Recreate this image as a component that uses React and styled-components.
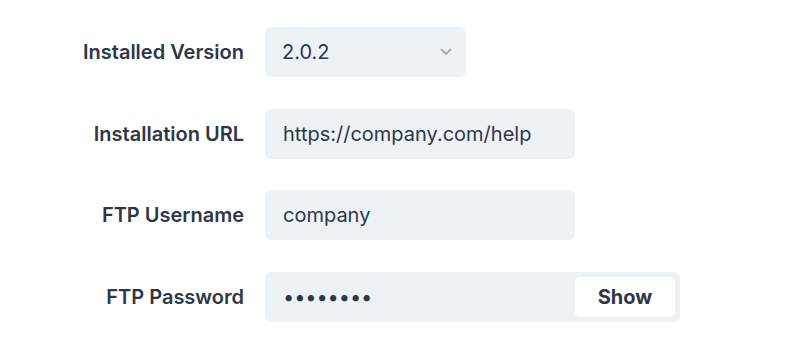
import React, { useState } from 'react';
import styled, { createGlobalStyle } from 'styled-components';

const GlobalStyle = createGlobalStyle`
  html, body {
    margin: 0;
    background: #fff;
    font-family: Inter, "Noto Sans", sans-serif;
    color: #2d3748;
  }
`

const Form = styled.form`
  display: grid;
  grid-template-columns: 244px auto;
  column-gap: 21px;
  row-gap: 31.6px;
  align-items: center;
  justify-items: start;
  padding-top: 27px;
`

const Label = styled.label`
  justify-self: end;
  font-size: 20px;
  font-weight: 600;
  color: #2d3748;
  white-space: nowrap;
`

const Field = styled.input`
  box-sizing: border-box;
  width: ${p => p.$width || 310}px;
  height: 50px;
  border: none;
  border-radius: 6px;
  background: #edf2f7;
  padding: 0 18px;
  font-family: inherit;
  font-size: 20px;
  color: #2d3748;
  outline: none;
`

const SelectWrap = styled.div`
  position: relative;
  width: 201px;
`

const Select = styled.select`
  box-sizing: border-box;
  width: 100%;
  height: 50px;
  border: none;
  border-radius: 6px;
  background: #edf2f7;
  padding: 0 40px 0 17px;
  font-family: inherit;
  font-size: 20px;
  color: #2d3748;
  appearance: none;
  outline: none;
`

const Chevron = styled.svg`
  position: absolute;
  right: 14px;
  top: 50%;
  transform: translateY(-50%);
  pointer-events: none;
`

const PasswordBox = styled.div`
  box-sizing: border-box;
  display: flex;
  align-items: center;
  width: 415px;
  height: 50px;
  padding: 5px;
  border-radius: 6px;
  background: #edf2f7;
`

const PasswordField = styled.input`
  flex: 1;
  min-width: 0;
  height: 100%;
  border: none;
  background: transparent;
  padding: 0 13px;
  font-family: inherit;
  font-size: 20px;
  letter-spacing: -0.1px;
  color: #2d3748;
  outline: none;
`

const ShowButton = styled.button`
  width: 100px;
  height: 40px;
  border: none;
  border-radius: 5px;
  background: #fff;
  font-family: inherit;
  font-size: 20px;
  font-weight: 700;
  color: #2d3748;
  cursor: pointer;
`

function App() {
  const [show, setShow] = useState(false)

  return (
    <>
      <GlobalStyle />
      <Form onSubmit={e => e.preventDefault()}>
        <Label htmlFor="version">Installed Version</Label>
        <SelectWrap>
          <Select id="version" defaultValue="2.0.2">
            <option>2.0.2</option>
            <option>2.0.1</option>
            <option>2.0.0</option>
          </Select>
          <Chevron width="12" height="8" viewBox="0 0 12 8" fill="none">
            <path d="M1.5 1.5 L6 6 L10.5 1.5" stroke="#a0aec0" strokeWidth="2" strokeLinecap="round" strokeLinejoin="round" />
          </Chevron>
        </SelectWrap>

        <Label htmlFor="url">Installation URL</Label>
        <Field id="url" defaultValue="https://company.com/help" />

        <Label htmlFor="user">FTP Username</Label>
        <Field id="user" defaultValue="company" />

        <Label htmlFor="pass">FTP Password</Label>
        <PasswordBox>
          <PasswordField id="pass" type={show ? 'text' : 'password'} defaultValue="password" />
          <ShowButton type="button" onClick={() => setShow(!show)}>
            {show ? 'Hide' : 'Show'}
          </ShowButton>
        </PasswordBox>
      </Form>
    </>
  );
}

export default App;
